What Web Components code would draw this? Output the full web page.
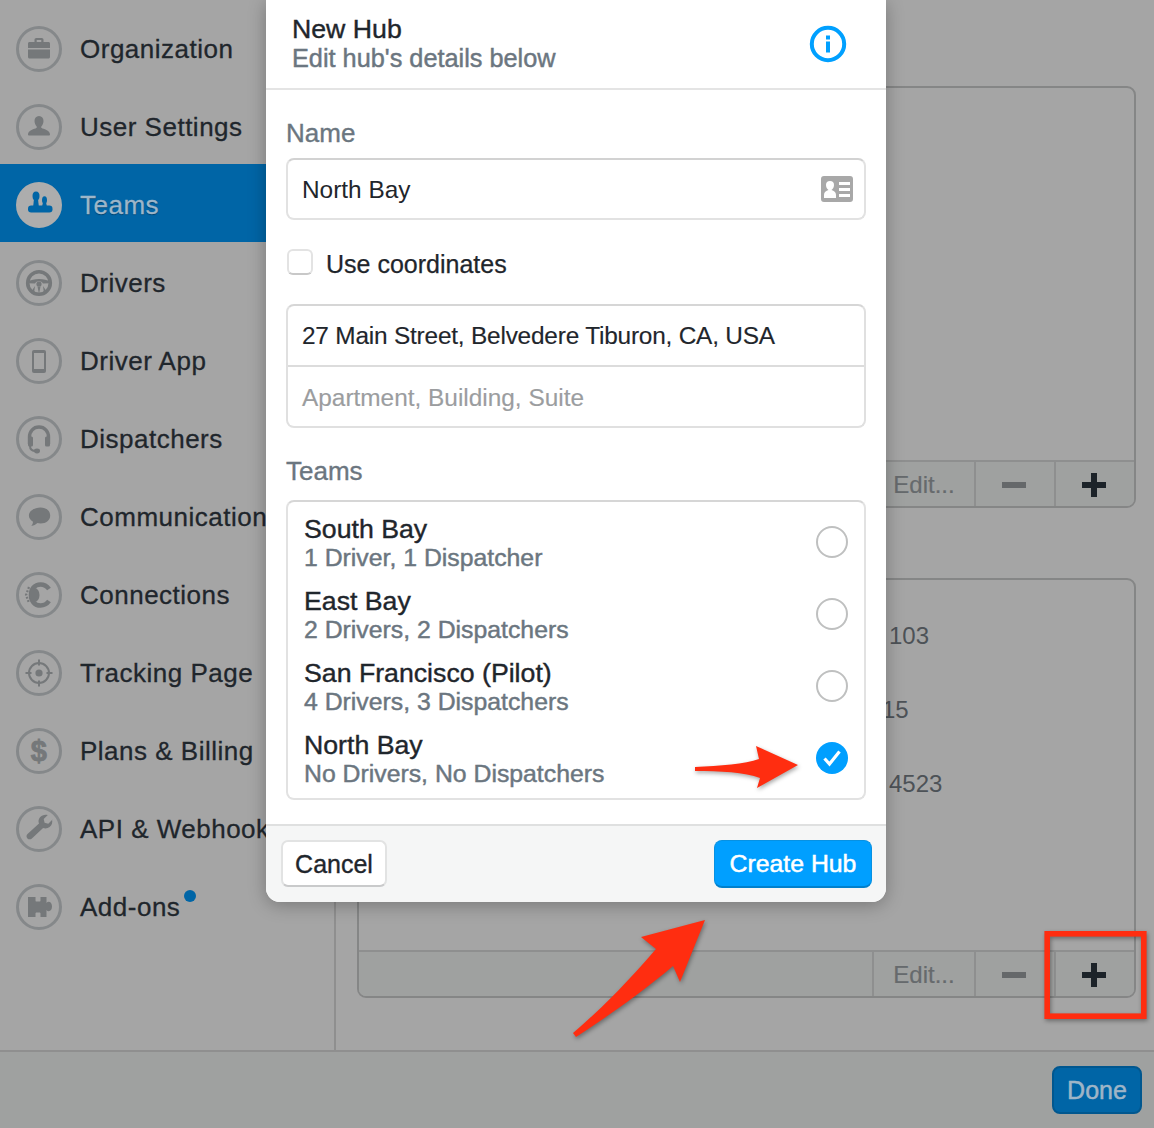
<!DOCTYPE html>
<html lang="en"><head><meta charset="utf-8"><title>New Hub</title>
<style>
html,body{margin:0;padding:0;background:#a5a5a5}
body{width:1154px;height:1128px;overflow:hidden;font:26px/32px "Liberation Sans",Arial,sans-serif;color:#1f262c}
</style></head><body>
<app-shell>
  <settings-nav slot="nav">
    <nav-item icon="briefcase">Organization</nav-item>
    <nav-item icon="user">User Settings</nav-item>
    <nav-item icon="teams" active>Teams</nav-item>
    <nav-item icon="wheel">Drivers</nav-item>
    <nav-item icon="phone">Driver App</nav-item>
    <nav-item icon="headset">Dispatchers</nav-item>
    <nav-item icon="chat">Communications</nav-item>
    <nav-item icon="connect">Connections</nav-item>
    <nav-item icon="target">Tracking Page</nav-item>
    <nav-item icon="dollar">Plans &amp; Billing</nav-item>
    <nav-item icon="wrench">API &amp; Webhooks</nav-item>
    <nav-item icon="puzzle" dot>Add-ons</nav-item>
  </settings-nav>
  <hub-card slot="main" style="height:422px"></hub-card>
  <hub-card slot="main" style="height:420px;margin-top:70px">
    <div style="margin-left:530px;margin-top:40px">103</div>
    <div style="margin-left:523px;margin-top:42px">15</div>
    <div style="margin-left:530px;margin-top:42px">4523</div>
  </hub-card>
  <done-bar slot="foot"></done-bar>
</app-shell>
<hub-modal>
  <span slot="title">New Hub</span>
  <span slot="sub">Edit hub's details below</span>
  <text-field label="Name" value="North Bay"></text-field>
  <check-row>Use coordinates</check-row>
  <address-group value="27 Main Street, Belvedere Tiburon, CA, USA" placeholder="Apartment, Building, Suite"></address-group>
  <team-list label="Teams">
    <team-row name="South Bay" meta="1 Driver, 1 Dispatcher"></team-row>
    <team-row name="East Bay" meta="2 Drivers, 2 Dispatchers"></team-row>
    <team-row name="San Francisco (Pilot)" meta="4 Drivers, 3 Dispatchers"></team-row>
    <team-row name="North Bay" meta="No Drivers, No Dispatchers" checked></team-row>
  </team-list>
</hub-modal>
<note-marks></note-marks>
<script>
const G='#75787a';
const BG='#a5a5a5';
const ICONS={
briefcase:`<path fill="${G}" d="M18.500 16v-2.200c0-1 .8-1.800 1.800-1.800h5.400c1 0 1.800.8 1.800 1.800V16h5c.8 0 1.500.7 1.500 1.500V22H12v-4.500c0-.8.7-1.500 1.500-1.500zm2.200 0h4.600v-2h-4.600zM12 23.500h22V31c0 .8-.7 1.500-1.500 1.500h-19c-.8 0-1.500-.7-1.500-1.500z"/>`,
user:`<path fill="${G}" d="M23 12c2.900 0 4.500 2.200 4.500 5 0 2.200-1 4.100-2 5.200-.5.500-.4 1.500.2 1.900 1.500 1 8.300 2 8.300 6.400 0 .8-.5 1-1.200 1H13.200c-.7 0-1.200-.2-1.200-1 0-4.400 6.800-5.400 8.300-6.400.6-.4.700-1.400.2-1.900-1-1.100-2-3-2-5.200 0-2.800 1.600-5 4.500-5z"/>`,
teams:`<ellipse cx="20" cy="14" rx="3.500" ry="4.600" fill="#0065a6"/><path fill="#0065a6" d="M18 17h4l.8 7H17.200z"/><ellipse cx="28.500" cy="18" rx="2.500" ry="3.800" fill="#0065a6"/><path fill="#0065a6" d="M27 20h3l.8 4h-4.600z"/><rect x="12" y="23.500" width="24.500" height="7" rx="3.200" fill="#0065a6"/>`,
wheel:`<circle cx="23" cy="23" r="11.300" fill="none" stroke="${G}" stroke-width="3.600"/><path fill="${G}" d="M12 21.500c5-3.500 17-3.500 22 0v1.800l-7 .2c-.8-1.400-2.300-2.300-4-2.300s-3.200.9-4 2.300l-7-.2z"/><circle cx="23" cy="24" r="2.600" fill="${G}"/><path fill="${G}" d="M21.500 26.500l1.500 7.500 1.500-7.500zM19 26l-4 6 3 1.500zM27 26l4 6-3 1.500z"/>`,
phone:`<rect x="16" y="12" width="14" height="23" rx="2" fill="${G}"/><rect x="18" y="15" width="10" height="16" fill="${BG}"/>`,
headset:`<path fill="none" stroke="${G}" stroke-width="3.400" d="M13.500 28v-7c0-5.800 4-10 9.500-10s9.500 4.200 9.500 10v7"/><rect x="12" y="20.500" width="5" height="10" rx="1.500" fill="${G}"/><rect x="29" y="20.500" width="5" height="10" rx="1.500" fill="${G}"/><path fill="none" stroke="${G}" stroke-width="2" d="M14 30c0 3 2 5 6 5"/><ellipse cx="21" cy="35" rx="3" ry="2.400" fill="${G}"/>`,
chat:`<path fill="${G}" d="M24.500 13.500c5.800 0 9.700 3.300 9.700 8s-3.900 8-9.700 8c-1.100 0-2.200-.2-3.100-.4-1.600 1.600-3.700 2.600-6.100 3 1.100-1.300 1.700-2.800 1.700-4.300-2.400-1.500-4.100-3.600-4.100-6.300 0-4.700 5.800-8 11.600-8z"/>`,
connect:`<path fill="none" stroke="${G}" stroke-width="4.600" d="M33 17c-2.200-3-5-4.500-8.500-4.500-6 0-9.500 4.800-9.500 10.500s3.500 10.500 9.500 10.500c3.500 0 6.300-1.500 8.500-4.500"/><ellipse cx="18.500" cy="23" rx="5" ry="7" fill="${G}"/><path fill="none" stroke="${G}" stroke-width="2.200" stroke-dasharray="2 1.500" d="M13 15l-3 8 3 8"/>`,
target:`<circle cx="23" cy="23" r="10" fill="none" stroke="${G}" stroke-width="2"/><circle cx="23" cy="23" r="3.600" fill="${G}"/><path stroke="${G}" stroke-width="2" d="M23 9.500v6M23 30.500v6M9.500 23h6M30.500 23h6"/>`,
dollar:`<text x="23" y="32.500" text-anchor="middle" font-family="Liberation Sans" font-weight="700" font-size="29" fill="${G}" stroke="${G}" stroke-width=".8" style="-webkit-text-stroke:0">$</text>`,
wrench:`<path fill="${G}" d="M36.500 13.500l-4.200 4.200-3.700-.9-.9-3.700 4.100-4.200c-3-.7-6 .1-7.800 2.300-1.500 1.900-1.900 4.300-1 6.400L11.500 28c-1.300 1.200-1.300 3.200-.1 4.400 1.200 1.200 3.300 1.200 4.500 0l11.200-10.300c2.200.8 4.600.4 6.500-1 2.300-1.800 3.200-4.900 2.400-7.600z"/>`,
puzzle:`<path fill="${G}" d="M12 13h7.500v3.500c0 1 .8 1 .8 1h3.400s.8 0 .8-1V13h6v6c.6-.8 1.300-1.200 2.200-1.200 1.800 0 3.300 1.900 3.300 4.700s-1.500 4.700-3.300 4.700c-.9 0-1.600-.4-2.200-1.200v7h-6v-3.500c0-1-.8-1-.8-1h-3.400s-.8 0-.8 1V33H12z"/>`
};
function el(name,html,fn){
  customElements.define(name,class extends HTMLElement{
    constructor(){super();this.attachShadow({mode:'open'});}
    connectedCallback(){
      this.shadowRoot.innerHTML=typeof html==='function'?html(this):html;
      if(fn)fn(this);
    }
  });
}
el('app-shell',`<style>
:host{display:flex;flex-direction:column;width:1154px;height:1128px}
.top{display:flex;height:1050px;box-sizing:border-box}
.nav{width:336px;box-sizing:border-box;flex:none;border-right:2px solid #8f8f8f}
.main{flex:1;padding:86px 18px 0 21px;box-sizing:border-box;min-width:0}
.foot{flex:1;border-top:2px solid #8f8f8f;background:#9fa1a0}
</style><div class="top"><div class="nav"><slot name="nav"></slot></div><div class="main"><slot name="main"></slot></div></div><div class="foot"><slot name="foot"></slot></div>`);
el('settings-nav',`<style>:host{display:block;padding-top:8px}</style><slot></slot>`);
el('nav-item',h=>`<style>
:host{display:flex;align-items:center;height:78px;box-sizing:border-box;padding:4px 0 0 16px;gap:18px;width:266px;white-space:nowrap;color:#1f262c;letter-spacing:.5px;-webkit-text-stroke:.3px currentColor;position:relative}
:host([active]){background:#0065a6;color:#9db6c9;text-shadow:0 1px 1px #00406b}
svg{width:46px;height:46px;flex:none;display:block}
.ring{fill:none;stroke:#85888a;stroke-width:3}
:host([active]) .ring{fill:#adadad;stroke:#adadad}
.dot{position:absolute;width:12px;height:12px;border-radius:50%;background:#0065a6;left:184px;top:24px}
</style><svg viewBox="0 0 46 46"><circle class="ring" cx="23" cy="23" r="21.500"/>${ICONS[h.getAttribute('icon')]}</svg><span><slot></slot></span>${h.hasAttribute('dot')?'<i class="dot"></i>':''}`);
el('hub-card',`<style>
:host{display:flex;flex-direction:column;box-sizing:border-box;border:2px solid #858686;border-radius:9px;background:#a5a5a5;color:#4d5257;overflow:hidden;font-size:24px}
.body{flex:1;min-height:0}
.bar{display:flex;height:46px;box-sizing:border-box;flex:none;border-top:2px solid #8e8f8f;background:#9fa1a0}
.bar div{display:flex;align-items:center;justify-content:center;border-left:2px solid #8e8f8f;box-sizing:border-box;flex:none;padding-top:1px}
.sp{flex:1!important;border-left:0!important}
.edit{width:102px;color:#666a6d;font-size:24px;-webkit-text-stroke:.2px currentColor}.m{width:80px}.p{width:80px;padding-right:2px}
.m{padding-right:2px}
svg{width:24px;height:24px}
</style><div class="body"><slot></slot></div><div class="bar"><div class="sp"></div><div class="edit">Edit...</div><div class="m"><svg viewBox="0 0 24 24"><rect y="9" width="24" height="6" fill="#65686a"/></svg></div><div class="p"><svg viewBox="0 0 24 24"><path fill="#1c2329" d="M9 0h6v9h9v6h-9v9H9v-9H0V9h9z"/></svg></div></div>`);
el('done-bar',`<style>
:host{display:flex;justify-content:flex-end;padding:14px 12px 0 0}
b{display:flex;align-items:center;justify-content:center;width:90px;height:48px;box-sizing:border-box;background:#0065a6;border:2px solid #00578f;border-radius:8px;color:#9fb5c7;font-weight:400;font-size:25px;-webkit-text-stroke:.5px currentColor}
</style><b>Done</b>`);
el('hub-modal',`<style>
:host{position:absolute;left:266px;top:0;width:620px;height:902px;display:flex;flex-direction:column;background:#fff;border-radius:0 0 14px 14px;box-shadow:0 3px 18px rgba(0,0,0,.28);overflow:hidden;color:#1f262c}
header{height:90px;box-sizing:border-box;border-bottom:2px solid #e4e4e4;padding:14px 20px 0 26px;display:flex;justify-content:space-between;flex:none}
.t{line-height:30px;font-size:26.700px;-webkit-text-stroke:.4px currentColor}
.s{line-height:28px;font-size:25.300px;color:#6b7680;-webkit-text-stroke:.45px currentColor}
svg{width:38px;height:38px;margin:11px 19px 0 0;flex:none}
.body{flex:1;padding:27px 20px 0}
footer{height:78px;box-sizing:border-box;border-top:2px solid #dfe0e0;background:#f5f6f6;display:flex;justify-content:space-between;padding:14px 14px 0 15px;flex:none}
.cancel{width:106px;height:47px;box-sizing:border-box;background:#fff;border:2px solid #e2e3e3;border-bottom-color:#c9cacb;border-radius:7px;display:flex;align-items:center;justify-content:center;font-size:25px;-webkit-text-stroke:.35px currentColor}
.create{width:158px;height:48px;box-sizing:border-box;background:#009fff;border:1px solid #0791e2;border-bottom:2px solid #0080cc;border-radius:8px;color:#fff;display:flex;align-items:center;justify-content:center;font-size:24.800px;-webkit-text-stroke:.5px currentColor}
</style><header><div><div class="t"><slot name="title"></slot></div><div class="s"><slot name="sub"></slot></div></div>
<svg viewBox="0 0 38 38"><circle cx="19" cy="19" r="16.200" fill="none" stroke="#00a0ff" stroke-width="4"/><rect x="17" y="16.500" width="4" height="11" fill="#00a0ff"/><rect x="17" y="10.500" width="4" height="4" fill="#00a0ff"/></svg></header>
<div class="body"><slot></slot></div><footer><div class="cancel">Cancel</div><div class="create">Create Hub</div></footer>`);
el('text-field',h=>`<style>
:host{display:block}
label{display:block;color:#6b7680;line-height:32px;-webkit-text-stroke:.35px currentColor;height:41px}
.box{height:62px;box-sizing:border-box;border:2px solid #e2e2e2;border-top-color:#d2d2d2;border-radius:8px;display:flex;align-items:center;justify-content:space-between;padding:1px 11px 0 14px;font-size:24.400px}
svg{width:32px;height:26px;display:block;margin-top:-1px}
</style><label>${h.getAttribute('label')}</label><div class="box"><span>${h.getAttribute('value')}</span><svg viewBox="0 0 32 26"><path fill="#a8a8a8" fill-rule="evenodd" d="M3 0h26a3 3 0 0 1 3 3v20a3 3 0 0 1-3 3H3a3 3 0 0 1-3-3V3a3 3 0 0 1 3-3zM9 5a4 4 0 0 0-4 4c0 2 1 4 2.500 5C5 15 3 16 3 19v3h12v-3c0-3-2-4-4.500-5C12 13 13 11 13 9a4 4 0 0 0-4-4zM18 6v3h11V6zM18 12v3h11v-3zM18 18v3h11v-3z"/></svg></div>`);
el('check-row',`<style>
:host{display:flex;gap:13px;height:32px;margin:28px 0 24px 1px;font-size:25px;-webkit-text-stroke:.25px currentColor}
i{width:26px;height:26px;margin-top:1px;box-sizing:border-box;border:2px solid #e3e3e3;border-bottom-color:#c8c8c8;border-radius:6px;background:#fff;flex:none}
</style><i></i><span><slot></slot></span>`);
el('address-group',h=>`<style>
:host{display:block;border:2px solid #e0e0e0;border-top-color:#d6d6d6;border-radius:8px;box-sizing:border-box;height:124px;font-size:24.400px;-webkit-text-stroke:.15px currentColor}
div{height:61px;box-sizing:border-box;padding:0 14px;display:flex;align-items:center}
.a{border-bottom:2px solid #dcdcdc;letter-spacing:-.2px}.b{color:#9b9d9f}
</style><div class="a">${h.getAttribute('value')}</div><div class="b">${h.getAttribute('placeholder')}</div>`);
el('team-list',h=>`<style>
:host{display:block;margin-top:27px}
label{display:block;color:#6b7680;line-height:32px;height:45px;-webkit-text-stroke:.35px currentColor}
.box{border:2px solid #e2e2e2;border-top-color:#d6d6d6;border-radius:8px;height:300px;box-sizing:border-box;padding-top:4px}
</style><label>${h.getAttribute('label')}</label><div class="box"><slot></slot></div>`);
el('team-row',h=>`<style>
:host{display:flex;justify-content:space-between;align-items:center;height:72px;box-sizing:border-box;padding:0 16px}
.txt{align-self:flex-start;padding-top:8px}
.n{line-height:30px;font-size:26.700px;-webkit-text-stroke:.4px currentColor}
.m{line-height:28px;font-size:24.800px;color:#6b7680;-webkit-text-stroke:.45px currentColor}
i{width:32px;height:32px;box-sizing:border-box;border:2px solid #bfc0c0;border-radius:50%;flex:none;display:block}
svg{width:32px;height:32px;display:block;flex:none}
</style><div class="txt"><div class="n">${h.getAttribute('name')}</div><div class="m">${h.getAttribute('meta')}</div></div>${h.hasAttribute('checked')?'<svg viewBox="0 0 32 32"><circle cx="16" cy="16" r="16" fill="#009fff"/><path d="M8.500 16.500l5 5.500 10-12.500" fill="none" stroke="#fff" stroke-width="3.200"/></svg>':'<i></i>'}`);
el('note-marks',`<style>
:host{position:absolute;left:0;top:0;width:1154px;height:1128px;pointer-events:none}
svg{display:block;width:1154px;height:1128px;filter:drop-shadow(1px 2px 2px rgba(0,0,0,.35))}
</style><svg viewBox="0 0 1154 1128"><path fill="#ff2d10" d="M695 767C720 766 745 764 759 759L756 746L798 765L757 788L760 778C745 772 720 771 695 771Z"/><path fill="#ff2d10" d="M705 920L641 937L656 949C625 985 600 1010 573 1033L576 1037C610 1015 645 990 673 966L680 982Z"/><rect x="1047.200" y="933.800" width="96.600" height="82.400" fill="none" stroke="#ff2d10" stroke-width="5.600"/></svg>`);
</script>
</body></html>
